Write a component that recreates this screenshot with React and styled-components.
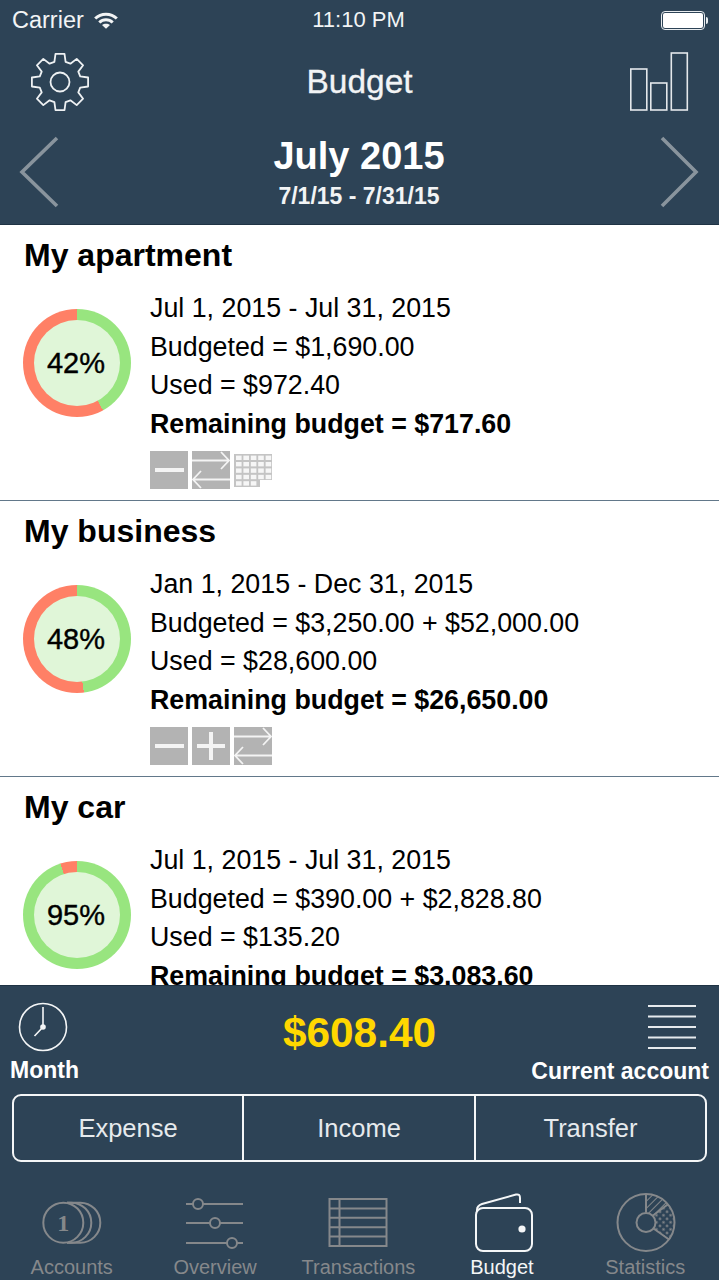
import styled, { createGlobalStyle } from "styled-components";

const NAVY = "#2d4356";

const GlobalStyle = createGlobalStyle`
  html, body {
    margin: 0;
    padding: 0;
    background: #fff;
  }
  body {
    font-family: "Liberation Sans", Arial, sans-serif;
    overflow: hidden;
  }
`;

const Page = styled.div`
  width: 719px;
  height: 1280px;
  display: flex;
  flex-direction: column;
  overflow: hidden;
`;

const Header = styled.header`
  height: 224px;
  flex: none;
  background: ${NAVY};
  color: #fff;
  border-bottom: 1px solid #1f3344;
  display: flex;
  flex-direction: column;
`;

const StatusBar = styled.div`
  height: 40px;
  padding: 0 14px 0 12px;
  display: grid;
  grid-template-columns: 1fr auto 1fr;
  align-items: center;
  font-size: 22px;
  color: #f2f4f5;
`;

const Carrier = styled.div`
  display: flex;
  align-items: center;
  gap: 10px;
  font-size: 23.5px;
`;

const Battery = styled.div`
  justify-self: end;
  width: 44px;
  height: 19px;
  box-sizing: border-box;
  border: 1px solid #e8ecef;
  border-radius: 4px;
  padding: 1px;
  position: relative;
  &::before {
    content: "";
    display: block;
    height: 100%;
    background: #fff;
    border-radius: 2px;
  }
  &::after {
    content: "";
    position: absolute;
    right: -4px;
    top: 5px;
    width: 2px;
    height: 7px;
    background: #e8ecef;
    border-radius: 0 2px 2px 0;
  }
`;

const NavRow = styled.div`
  height: 70px;
  padding: 12px 30px 0 30px;
  box-sizing: border-box;
  display: flex;
  justify-content: space-between;
  align-items: flex-start;
`;

const NavTitle = styled.div`
  font-size: 33.5px;
  line-height: 60px;
  color: #f2f4f5;
  -webkit-text-stroke: 0.3px #f2f4f5;
`;

const DateRow = styled.div`
  padding: 26px 20px 0 19px;
  display: flex;
  justify-content: space-between;
  align-items: flex-start;
`;

const DateText = styled.div`
  text-align: center;
  font-weight: bold;
`;

const Month = styled.div`
  font-size: 38px;
  line-height: 44px;
  margin-top: -2px;
`;

const Range = styled.div`
  font-size: 23px;
  line-height: 30px;
  margin-top: 3px;
  color: #f2f4f5;
`;

const List = styled.main`
  flex: 1;
  min-height: 0;
  overflow: hidden;
  background: #fff;
`;

const Card = styled.section`
  height: 276px;
  box-sizing: border-box;
  border-bottom: 1px solid #62788a;
  padding: 0 24px;
  color: #000;
`;

const CardTitle = styled.h2`
  margin: 0;
  height: 63px;
  font-size: 32px;
  font-weight: bold;
  line-height: 61px;
`;

const CardBody = styled.div`
  display: flex;
  gap: 19px;
  margin-left: -1px;
`;

const Gauge = styled.div`
  width: 108px;
  height: 108px;
  margin-top: 21px;
  flex: none;
  border-radius: 50%;
  background: conic-gradient(#98e57f 0 ${(p) => p.$value}%, #ff8066 ${(p) => p.$value}% 100%);
  display: flex;
  align-items: center;
  justify-content: center;
  &::before {
    content: "";
    position: absolute;
    width: 86px;
    height: 86px;
    border-radius: 50%;
    background: #e0f6d8;
  }
`;

const GaugeLabel = styled.span`
  position: relative;
  right: 1px;
  font-size: 29px;
  -webkit-text-stroke: 0.4px #000;
`;

const Info = styled.div`
  display: flex;
  flex-direction: column;
  padding-top: 1px;
`;

const Line = styled.div`
  font-size: 26.8px;
  line-height: 38.5px;
  font-weight: ${(p) => (p.$bold ? "bold" : "normal")};
  white-space: nowrap;
`;

const Actions = styled.div`
  display: flex;
  gap: 4px;
  margin-top: 8px;
`;

const ActionIcon = styled.svg`
  width: 38px;
  height: 38px;
  display: block;
`;

const Bottom = styled.footer`
  height: 295px;
  flex: none;
  box-sizing: border-box;
  background: ${NAVY};
  border-top: 1px solid #1f3344;
  color: #fff;
  display: flex;
  flex-direction: column;
`;

const Summary = styled.div`
  height: 108px;
  flex: none;
  display: grid;
  grid-template-columns: 1fr auto 1fr;
  padding: 0 10px;
`;

const SummaryItem = styled.div`
  display: flex;
  flex-direction: column;
  align-items: ${(p) => (p.$right ? "flex-end" : "flex-start")};
`;

const SummaryIcon = styled.svg`
  display: block;
  margin-top: ${(p) => (p.$right ? "18px" : "16px")};
  margin-left: ${(p) => (p.$right ? "0" : "8px")};
  margin-right: ${(p) => (p.$right ? "13px" : "0")};
`;

const SummaryLabel = styled.div`
  font-size: 23px;
  font-weight: bold;
  line-height: 28px;
  margin-top: ${(p) => (p.$right ? "7px" : "4px")};
  white-space: nowrap;
`;

const Amount = styled.div`
  font-size: 42.4px;
  font-weight: bold;
  color: #ffd700;
  line-height: 48px;
  margin-top: 23px;
`;

const Segments = styled.div`
  margin: 0 12px;
  height: 68px;
  flex: none;
  box-sizing: border-box;
  border: 2px solid #f4f6f7;
  border-radius: 9px;
  display: grid;
  grid-template-columns: 228px 232px 1fr;
`;

const Segment = styled.div`
  display: flex;
  align-items: center;
  justify-content: center;
  font-size: 25.5px;
  color: #e6eaed;
  & + & {
    border-left: 2px solid #f4f6f7;
  }
`;

const Tabs = styled.nav`
  display: grid;
  grid-template-columns: repeat(5, 1fr);
  margin-top: 30px;
  padding-right: 2px;
`;

const Tab = styled.div`
  display: flex;
  flex-direction: column;
  align-items: center;
  color: ${(p) => (p.$active ? "#f4f6f7" : "#85888b")};
`;

const TabIcon = styled.svg`
  width: 64px;
  height: 64px;
  display: block;
  fill: none;
  stroke: currentColor;
  stroke-width: 2;
`;

const TabLabel = styled.span`
  font-size: 20px;
  line-height: 24px;
  margin-top: -1px;
  white-space: nowrap;
`;

const gearPath = () => {
  const cx = 30;
  const cy = 30;
  const pts = [];
  for (let i = 0; i < 8; i++) {
    const a = (i * Math.PI) / 4 - Math.PI / 2;
    const at = (r, d) => [cx + r * Math.cos(a + d), cy + r * Math.sin(a + d)];
    pts.push(at(21, -0.27), at(28.5, -0.16), at(28.5, 0.16), at(21, 0.27));
  }
  return "M" + pts.map((p) => p.map((n) => n.toFixed(1)).join(" ")).join("L") + "Z";
};

const Wifi = () => (
  <svg width="24" height="17" viewBox="0 0 24 17" fill="none" stroke="#f2f4f5" strokeWidth="3">
    <path d="M1.2 6.5C7 0.8 17 0.8 22.8 6.5" />
    <path d="M5.3 10.500C9 6.800 15 6.800 18.700 10.500" />
    <path d="M12 16.800L8 13C10.300 11.200 13.700 11.200 16 13Z" fill="#f2f4f5" stroke="none" />
  </svg>
);

const Gear = () => (
  <svg width="60" height="60" viewBox="0 0 60 60" fill="none" stroke="#eef1f3" strokeWidth="1.8">
    <path d={gearPath()} strokeLinejoin="round" />
    <circle cx="30" cy="30" r="9.5" />
  </svg>
);

const Bars = () => (
  <svg width="60" height="60" viewBox="0 0 60 60" fill="none" stroke="#e4e8eb" strokeWidth="1.6">
    <rect x="1.8" y="17" width="16" height="41" />
    <rect x="21.8" y="31" width="16" height="27" />
    <rect x="42.3" y="1" width="16" height="57" />
  </svg>
);

const Chevron = ({ right }) => (
  <svg width="40" height="72" viewBox="0 0 40 72" fill="none" stroke="#89949d" strokeWidth="3.6">
    <path d={right ? "M3 2L37 36L3 70" : "M38 2L3 36L38 70"} />
  </svg>
);

const MinusIcon = () => (
  <ActionIcon viewBox="0 0 38 38">
    <rect width="38" height="38" fill="#b3b3b3" />
    <rect x="5" y="17" width="29" height="4" fill="#f4f4f4" />
  </ActionIcon>
);

const PlusIcon = () => (
  <ActionIcon viewBox="0 0 38 38">
    <rect width="38" height="38" fill="#b3b3b3" />
    <path d="M5 19H33M19 5V33" stroke="#f4f4f4" strokeWidth="4" />
  </ActionIcon>
);

const TransferIcon = () => (
  <ActionIcon viewBox="0 0 38 38">
    <rect width="38" height="38" fill="#b3b3b3" />
    <path
      d="M0 9.5H37M29 1L37 9.5L29 18M38 28.5H1M9 20L1 28.5L9 37"
      fill="none"
      stroke="#f4f4f4"
      strokeWidth="1.8"
    />
  </ActionIcon>
);

const CalendarIcon = () => (
  <ActionIcon viewBox="0 0 38 38">
    <path d="M0 3H38V29H26V36H0Z" fill="#c4c4c4" />
    {[0, 1, 2, 3, 4].map((c) =>
      [0, 1, 2, 3, 4].map((r) =>
        r === 4 && c > 2 ? null : (
          <rect key={`${c}-${r}`} x={2 + c * 7.4} y={4.6 + r * 6.4} width="5.6" height="4.4" fill="#f6f6f6" />
        )
      )
    )}
  </ActionIcon>
);

const Clock = () => (
  <SummaryIcon as="svg" width="50" height="50" viewBox="0 0 50 50" fill="none" stroke="#f4f6f7" strokeWidth="1.6">
    <circle cx="25" cy="25" r="23.5" />
    <path d="M25 25V5M25 25L16.500 34" />
    <circle cx="25" cy="25" r="2.8" fill="#f4f6f7" stroke="none" />
  </SummaryIcon>
);

const AccountLines = () => (
  <SummaryIcon $right as="svg" width="48" height="46" viewBox="0 0 48 46" stroke="#e6eaed" strokeWidth="1.8">
    <path d="M0 2H48M0 12.500H48M0 23H48M0 33.500H48M0 44H48" />
  </SummaryIcon>
);

const CoinsIcon = () => (
  <TabIcon viewBox="0 0 64 64">
    <path d="M27 10.700H40.300A20 20 0 0 1 40.300 50.700H27" />
    <path d="M27 10.700H31.300A20 20 0 0 1 31.300 50.700H27" />
    <circle cx="23.300" cy="30.700" r="20" fill={NAVY} />
    <text x="23.300" y="39" textAnchor="middle" fontFamily="'Liberation Serif', serif" fontWeight="bold" fontSize="24" fill="currentColor" stroke="none">
      1
    </text>
  </TabIcon>
);

const SlidersIcon = () => (
  <TabIcon viewBox="0 0 64 64">
    <path d="M3 12H10M20 12H60M3 31H27M37 31H60M3 51H44M54 51H60" />
    <circle cx="15" cy="12" r="5" />
    <circle cx="32" cy="31" r="5" />
    <circle cx="49" cy="51" r="5" />
  </TabIcon>
);

const TableIcon = () => (
  <TabIcon viewBox="0 0 64 64">
    <rect x="3.500" y="7" width="57" height="47" />
    <path d="M13.500 7V54M3.500 16.400H60.500M3.500 25.800H60.500M3.500 35.200H60.500M3.500 44.600H60.500" />
  </TabIcon>
);

const WalletIcon = () => (
  <TabIcon viewBox="0 0 64 64">
    <rect x="6" y="16" width="56" height="43" rx="7" />
    <path d="M7 20V18C7 15 9 13 12 12L46 2.500C49 2 50 3 50 6V11" />
    <circle cx="52" cy="37" r="3.600" fill="currentColor" stroke="none" />
  </TabIcon>
);

const PieIcon = () => (
  <TabIcon viewBox="0 0 64 64">
    <defs>
      <pattern id="hatch" width="5" height="5" patternUnits="userSpaceOnUse" patternTransform="rotate(45)">
        <path d="M0 0V5" stroke="currentColor" strokeWidth="2" />
      </pattern>
      <pattern id="dots" width="5" height="5" patternUnits="userSpaceOnUse" patternTransform="rotate(45)">
        <circle cx="2.500" cy="2.500" r="1.200" fill="currentColor" stroke="none" />
      </pattern>
    </defs>
    <g transform="translate(1 -1.5)">
      <path d="M32 32V3.500A28.500 28.500 0 0 1 54 13.800Z" fill="url(#hatch)" stroke="none" />
      <path d="M32 32L54 13.800A28.500 28.500 0 0 1 55 49Z" fill="url(#dots)" stroke="none" />
      <circle cx="32" cy="32" r="28.500" />
      <path d="M32 3.500V22M39 25L54 13.800M39.500 38L55 49" />
      <circle cx="32" cy="32" r="9.500" fill={NAVY} />
    </g>
  </TabIcon>
);

const budgets = [
  {
    name: "My apartment",
    percent: 42,
    period: "Jul 1, 2015 - Jul 31, 2015",
    budgeted: "$1,690.00",
    used: "$972.40",
    remaining: "$717.60",
    actions: [MinusIcon, TransferIcon, CalendarIcon],
  },
  {
    name: "My business",
    percent: 48,
    period: "Jan 1, 2015 - Dec 31, 2015",
    budgeted: "$3,250.00 + $52,000.00",
    used: "$28,600.00",
    remaining: "$26,650.00",
    actions: [MinusIcon, PlusIcon, TransferIcon],
  },
  {
    name: "My car",
    percent: 95,
    period: "Jul 1, 2015 - Jul 31, 2015",
    budgeted: "$390.00 + $2,828.80",
    used: "$135.20",
    remaining: "$3,083.60",
    actions: [MinusIcon, PlusIcon, TransferIcon],
  },
];

const tabs = [
  { label: "Accounts", Icon: CoinsIcon },
  { label: "Overview", Icon: SlidersIcon },
  { label: "Transactions", Icon: TableIcon },
  { label: "Budget", Icon: WalletIcon, active: true },
  { label: "Statistics", Icon: PieIcon },
];

const App = () => (
  <Page>
    <GlobalStyle />
    <Header>
      <StatusBar>
        <Carrier>
          Carrier <Wifi />
        </Carrier>
        <div>11:10 PM</div>
        <Battery />
      </StatusBar>
      <NavRow>
        <Gear />
        <NavTitle>Budget</NavTitle>
        <Bars />
      </NavRow>
      <DateRow>
        <Chevron />
        <DateText>
          <Month>July 2015</Month>
          <Range>7/1/15 - 7/31/15</Range>
        </DateText>
        <Chevron right />
      </DateRow>
    </Header>
    <List>
      {budgets.map((b) => (
        <Card key={b.name}>
          <CardTitle>{b.name}</CardTitle>
          <CardBody>
            <Gauge $value={b.percent}>
              <GaugeLabel>{b.percent}%</GaugeLabel>
            </Gauge>
            <Info>
              <Line>{b.period}</Line>
              <Line>Budgeted = {b.budgeted}</Line>
              <Line>Used = {b.used}</Line>
              <Line $bold>Remaining budget = {b.remaining}</Line>
              <Actions>
                {b.actions.map((Action, i) => (
                  <Action key={i} />
                ))}
              </Actions>
            </Info>
          </CardBody>
        </Card>
      ))}
    </List>
    <Bottom>
      <Summary>
        <SummaryItem>
          <Clock />
          <SummaryLabel>Month</SummaryLabel>
        </SummaryItem>
        <Amount>$608.40</Amount>
        <SummaryItem $right>
          <AccountLines />
          <SummaryLabel $right>Current account</SummaryLabel>
        </SummaryItem>
      </Summary>
      <Segments>
        <Segment>Expense</Segment>
        <Segment>Income</Segment>
        <Segment>Transfer</Segment>
      </Segments>
      <Tabs>
        {tabs.map(({ label, Icon, active }) => (
          <Tab key={label} $active={active}>
            <Icon />
            <TabLabel>{label}</TabLabel>
          </Tab>
        ))}
      </Tabs>
    </Bottom>
  </Page>
);

export default App;
